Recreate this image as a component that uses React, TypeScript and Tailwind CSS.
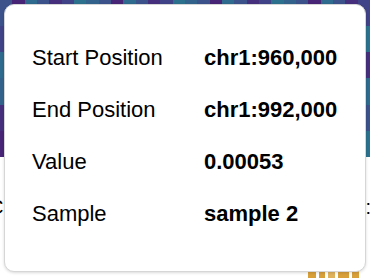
const palette = ["#3b528b", "#33638d", "#2c728e", "#404387", "#46307e", "#3b528b", "#2e6b8e", "#482576"];

const rows = [
  { label: "Start Position", value: "chr1:960,000" },
  { label: "End Position", value: "chr1:992,000" },
  { label: "Value", value: "0.00053" },
  { label: "Sample", value: "sample 2" },
];

function Heatmap() {
  const cells = [];
  for (let r = 0; r < 6; r++) {
    for (let c = 0; c < 30; c++) {
      const color = palette[(c * 7 + r * 3 + ((c * r) % 5)) % palette.length];
      cells.push(<div key={`${r}-${c}`} style={{ backgroundColor: color }} />);
    }
  }
  return <div className="grid h-[157px] w-full grid-cols-[repeat(30,1fr)] grid-rows-6">{cells}</div>;
}

export default function App() {
  return (
    <div className="relative h-[278px] w-[370px] overflow-hidden bg-white font-['Liberation_Sans',Arial,sans-serif] text-black">
      <Heatmap />

      {/* area under the heatmap, mostly hidden by the tooltip */}
      <div className="flex h-[81px] flex-col">
        <div className="mt-[40px] flex items-center justify-between text-[20px] leading-none">
          <span className="-ml-[11px]">C</span>
          <span className="-mr-[1px]">:</span>
        </div>
        <div className="mt-[22px] h-px w-full bg-black" />
      </div>
      <div className="flex h-[40px] items-end gap-[3px] pl-[308px]">
        <div className="h-[12px] w-[8px] bg-[#d9a03a]" />
        <div className="h-[10px] w-[6px] bg-[#d9a03a]" />
        <div className="h-[9px] w-[7px] bg-[#e0b25c]" />
        <div className="h-[12px] w-[11px] bg-[#d9a03a]" />
        <div className="h-[11px] w-[7px] bg-[#d9a03a]" />
      </div>

      {/* tooltip */}
      <div className="absolute left-[4px] top-[4px] h-[268px] w-[362px] rounded-[10px] border border-[#d6d6d6] bg-white pl-[27px] pt-[27px] shadow-[0_1px_3px_rgba(0,0,0,0.15)]">
        {rows.map((row) => (
          <div key={row.label} className="flex h-[52px] items-center text-[22px] leading-none">
            <span className="w-[172px]">{row.label}</span>
            <span className="font-bold">{row.value}</span>
          </div>
        ))}
      </div>
    </div>
  );
}
